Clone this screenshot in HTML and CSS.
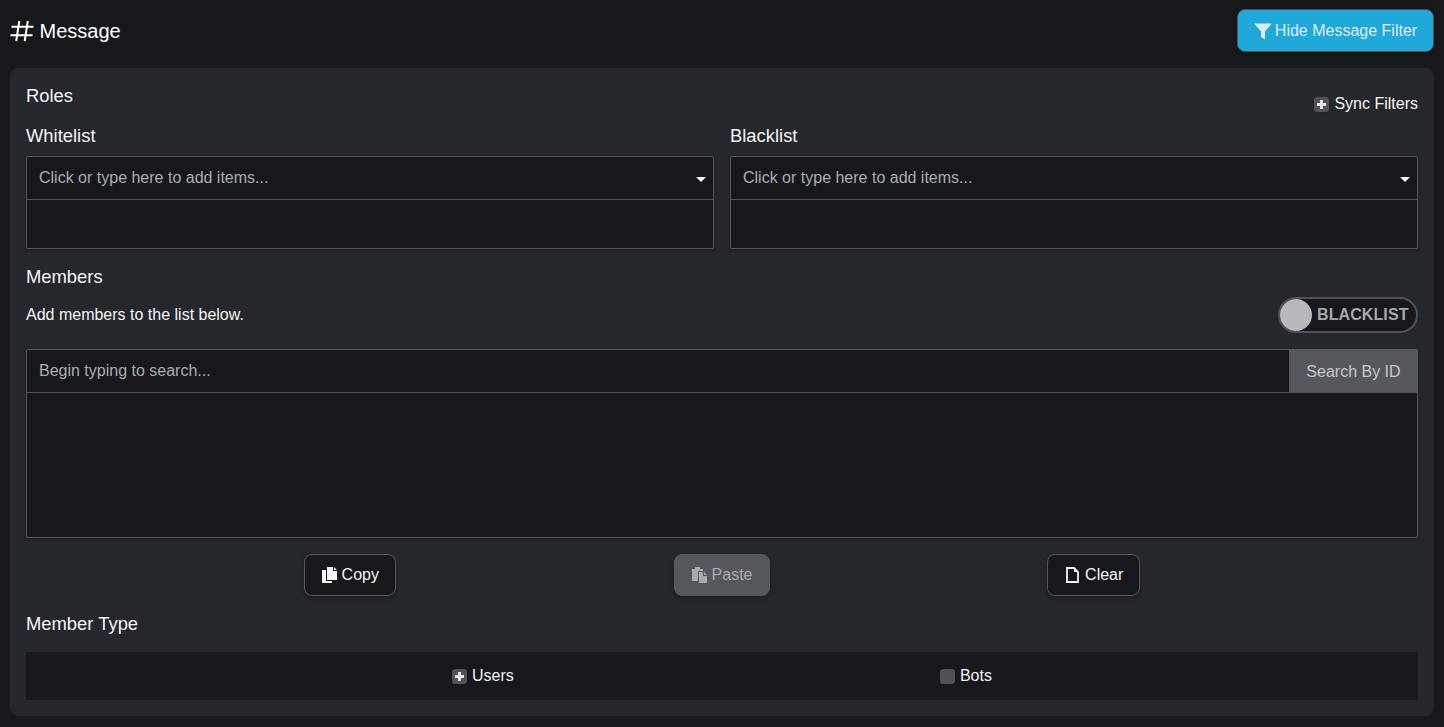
FILE: index.html
```html
<!DOCTYPE html>
<html lang="en">
<head>
<meta charset="utf-8">
<title>Message</title>
<link rel="stylesheet" href="styles.css">
</head>
<body>
<header class="topbar">
  <h1 class="title">
    <svg class="hash" viewBox="0 0 24 24" width="24" height="24"><path d="M9.300 2 6.200 22M17.800 2l-3.100 20M1.500 7.700h22M.5 16.300h22" fill="none" stroke="currentColor" stroke-width="2"/></svg>
    <span>Message</span>
  </h1>
  <button class="btn-filter">
    <svg class="ico-filter" viewBox="0 0 18 18" width="18" height="18"><path d="M.2 1.500h17.600L11 9.500V17.500l-4-2.500V9.500z" fill="currentColor"/></svg>Hide Message Filter
  </button>
</header>
<main class="card">
  <div class="roles-head">
    <span class="label roles-label">Roles</span>
    <label class="check sync"><span class="box"><span class="plus"></span></span>Sync Filters</label>
  </div>
  <div class="lists">
    <section class="list">
      <div class="label list-label">Whitelist</div>
      <div class="multi">
        <div class="multi-input">Click or type here to add items...<span class="caret"></span></div>
        <div class="multi-items"></div>
      </div>
    </section>
    <section class="list">
      <div class="label list-label">Blacklist</div>
      <div class="multi">
        <div class="multi-input">Click or type here to add items...<span class="caret"></span></div>
        <div class="multi-items"></div>
      </div>
    </section>
  </div>
  <div class="label members-label">Members</div>
  <div class="members-row">
    <span class="hint">Add members to the list below.</span>
    <div class="toggle"><span class="knob"></span><span class="toggle-text">BLACKLIST</span></div>
  </div>
  <div class="search">
    <div class="search-row">
      <div class="search-input">Begin typing to search...</div>
      <div class="search-btn">Search By ID</div>
    </div>
    <div class="search-results"></div>
  </div>
  <div class="actions">
    <button class="act">
      <svg class="ico" viewBox="0 0 15 16" width="15" height="16"><path d="M5 0h6v4h4v9H5z M12 0l3 3h-3z" fill="currentColor"/><path d="M0 3h4v11h6v2H0z" fill="currentColor"/></svg>Copy
    </button>
    <button class="act act-off">
      <svg class="ico" viewBox="0 0 15 16" width="15" height="16"><path d="M0 2h3V0h5v2h3v2H6v10H0z" fill="currentColor"/><path d="M7 5h4v4h4v7H7zM12 5l3 3h-3z" fill="currentColor"/></svg>Paste
    </button>
    <button class="act">
      <svg class="ico" viewBox="0 0 15 16" width="15" height="16"><path d="M2 1h7l4 4v10H2z" fill="none" stroke="currentColor" stroke-width="1.800"/><path d="M9 1v4h4z" fill="currentColor"/></svg>Clear
    </button>
  </div>
  <div class="label type-label">Member Type</div>
  <div class="types">
    <label class="check"><span class="box"><span class="plus"></span></span>Users</label>
    <label class="check"><span class="box"></span>Bots</label>
  </div>
</main>
</body>
</html>
```

FILE: styles.css
```css
* { box-sizing: border-box; }
html, body { margin: 0; height: 100%; }
body {
  background: #16181c;
  color: #f4f5f6;
  font-family: "Liberation Sans", Arial, sans-serif;
  font-size: 16px;
  line-height: 24px;
  padding: 0 10px;
  overflow: hidden;
}
button { font: inherit; cursor: pointer; }

.topbar {
  height: 68px;
  display: flex;
  align-items: flex-start;
  justify-content: space-between;
}
.title {
  margin: 19px 0 0;
  display: flex;
  align-items: center;
  gap: 6px;
  font-size: 20px;
  font-weight: 400;
  line-height: 24px;
  color: #fff;
}
.title span { margin-left: -.5px; }
.hash { display: block; }
.btn-filter {
  margin-top: 9px;
  height: 43px;
  width: 197px;
  display: flex;
  align-items: center;
  justify-content: center;
  gap: 3px;
  background: #20a8d8;
  color: #dfebf1;
  border: 1px solid #4c5258;
  border-radius: 8px;
  padding: 0;
  box-shadow: 0 1px 3px rgba(0, 0, 0, .35);
}
.ico-filter { display: block; }

.card {
  background: #24272b;
  border-radius: 8px;
  height: 648px;
  padding: 16px;
}
.label {
  color: #f4f5f6;
  font-size: 18.400px;
}
.roles-head {
  display: flex;
  justify-content: space-between;
  align-items: flex-start;
  height: 40px;
}
.sync { margin-top: 8px; }
.check {
  display: inline-flex;
  align-items: center;
  gap: 5px;
  color: #f4f5f6;
}
.box {
  width: 15px;
  height: 15px;
  border-radius: 3px;
  background: #505356;
  display: flex;
  align-items: center;
  justify-content: center;
  box-shadow: 0 0 1px rgba(0, 0, 0, .6);
}
.plus {
  width: 9px;
  height: 9px;
  background:
    linear-gradient(#e4e5e5, #e4e5e5) center / 9px 3px no-repeat,
    linear-gradient(#e4e5e5, #e4e5e5) center / 3px 9px no-repeat;
  border-radius: 1px;
  filter: blur(.3px);
}

.lists {
  display: flex;
  gap: 16px;
}
.list { flex: 1 1 0; }
.list-label { height: 24px; margin-bottom: 8px; }
.multi {
  height: 93px;
  background: #16181c;
  border: 1px solid #54575b;
  border-radius: 2px;
  box-shadow: 0 1px 3px rgba(0, 0, 0, .3);
  display: flex;
  flex-direction: column;
}
.multi-input {
  height: 43px;
  padding: 9px 12px;
  color: #a9adb1;
  border-bottom: 1px solid #54575b;
  display: flex;
  align-items: center;
  justify-content: space-between;
}
.caret {
  width: 0;
  height: 0;
  border-left: 5.500px solid transparent;
  border-right: 5.500px solid transparent;
  border-top: 5.500px solid #fff;
  margin-right: -5px;
  margin-top: 3px;
}
.multi-items { flex: 1; }

.members-label { margin-top: 16px; height: 24px; }
.members-row {
  display: flex;
  justify-content: space-between;
  align-items: center;
  height: 36px;
  margin-top: 8px;
}
.hint { color: #f4f5f6; }
.toggle {
  width: 140px;
  height: 36px;
  border-radius: 18px;
  background: #16181c;
  border: 2px solid #4f5256;
  display: flex;
  align-items: center;
  gap: 5px;
}
.knob {
  width: 32px;
  height: 32px;
  border-radius: 50%;
  background: #b8b9ba;
  flex: none;
}
.toggle-text {
  font-weight: 700;
  color: #a6a8aa;
  letter-spacing: .1px;
}

.search {
  margin-top: 16px;
  height: 189px;
  background: #16181c;
  border: 1px solid #54575b;
  border-radius: 2px;
  box-shadow: 0 1px 3px rgba(0, 0, 0, .3);
}
.search-row {
  display: flex;
  height: 43px;
  border-bottom: 1px solid #54575b;
}
.search-input {
  flex: 1;
  padding: 9px 12px;
  color: #a9adb1;
}
.search-btn {
  width: 129px;
  margin: -1px -1px 0 0;
  height: 44px;
  padding-top: 1px;
  background: #54575b;
  color: #c5c8ca;
  display: flex;
  align-items: center;
  justify-content: center;
  border-top-right-radius: 2px;
}

.actions {
  display: flex;
  justify-content: space-evenly;
  margin-top: 16px;
}
.act {
  height: 42px;
  padding: 0 16px 0 17px;
  display: inline-flex;
  align-items: center;
  gap: 5px;
  background: #16181c;
  color: #f4f5f6;
  border: 1px solid #54575b;
  border-radius: 8px;
  box-shadow: 0 2px 4px rgba(0, 0, 0, .3);
}
.ico { display: block; flex: none; }
.act-off {
  background: #54575b;
  border-color: #54575b;
  color: #a9acaf;
}

.type-label { margin-top: 16px; height: 24px; }
.types {
  margin-top: 16px;
  height: 48px;
  background: #16181c;
  border-radius: 2px;
  display: flex;
  align-items: center;
  justify-content: space-evenly;
}
```
